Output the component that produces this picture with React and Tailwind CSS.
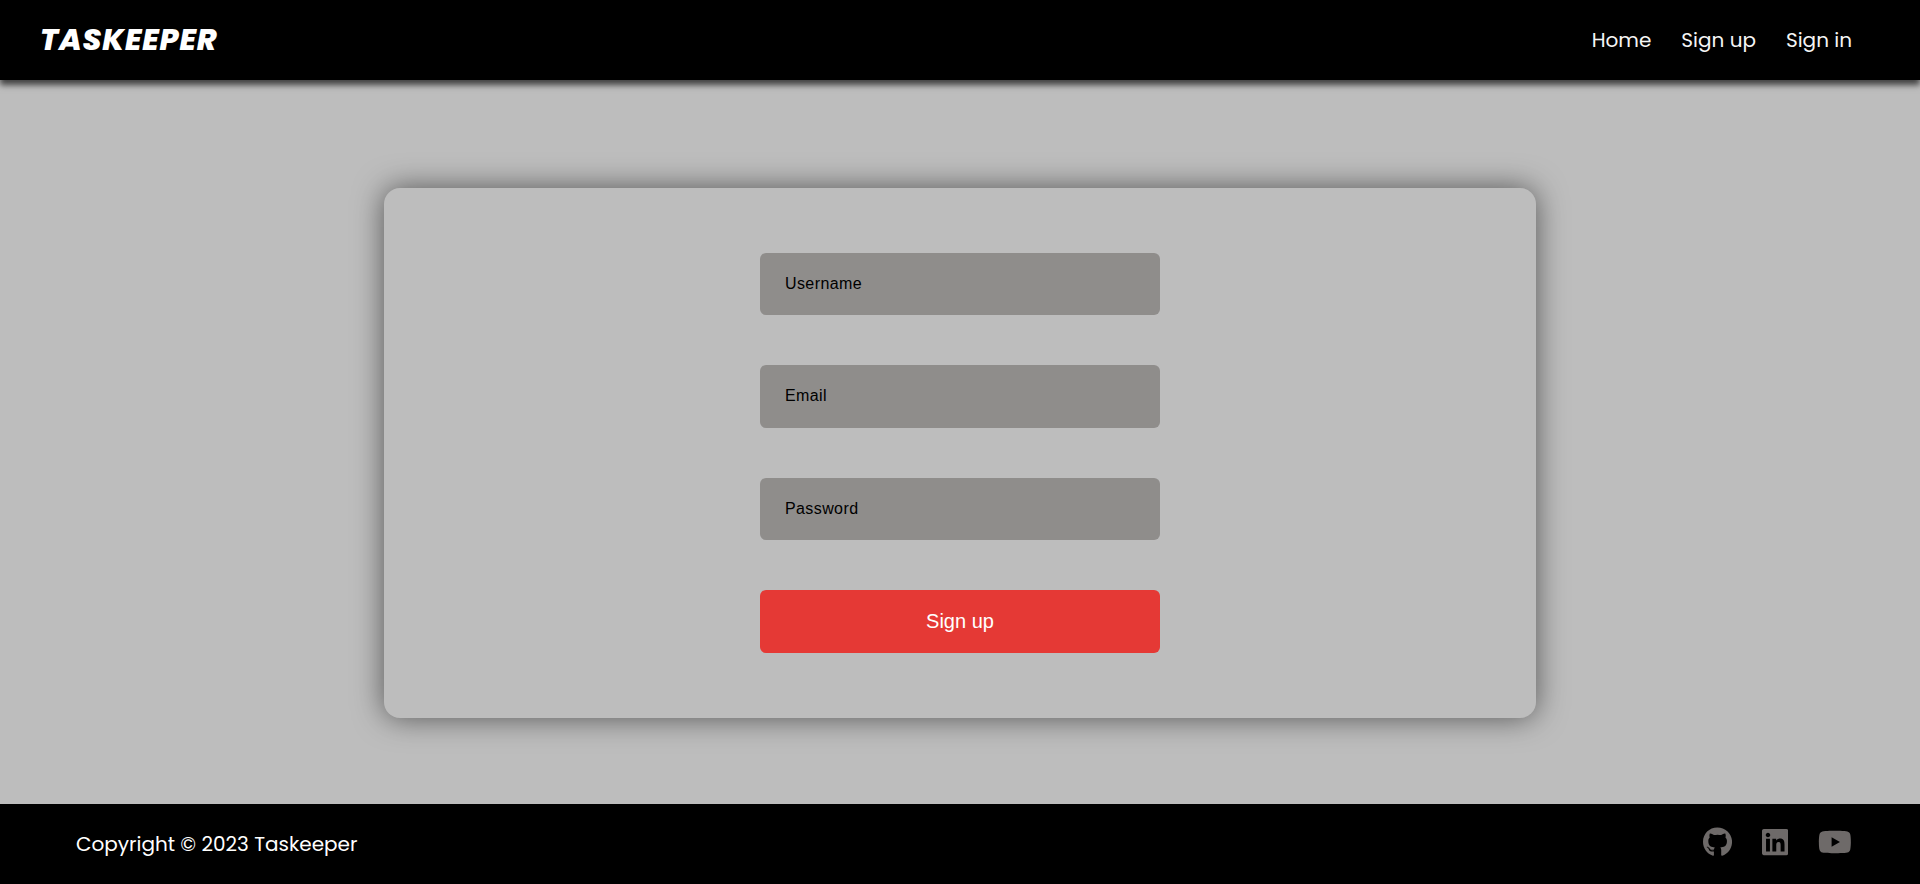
import { FaGithub, FaLinkedin, FaYoutube } from "react-icons/fa";

const fields = [
  { label: "Username", type: "text", inset: "" },
  { label: "Email", type: "email", inset: "pb-[2px]" },
  { label: "Password", type: "password", inset: "" },
];

export default function App() {
  return (
    <div className="flex h-[884px] w-full flex-col overflow-hidden bg-[#bdbdbd] font-['Poppins','Inter',sans-serif]">
      <header className="z-10 flex h-20 shrink-0 items-center justify-between bg-black pr-[68px] pl-[40px] text-white shadow-[0_5px_6px_rgba(0,0,0,0.65)]">
        <a href="#" className="text-[30px] leading-[44px] font-extrabold tracking-[0.85px] italic">TASKEEPER</a>
        <nav className="flex gap-[30px] text-[20px] whitespace-nowrap text-[#f5f5f5]">
          <a href="#">Home</a>
          <a href="#">Sign up</a>
          <a href="#">Sign in</a>
        </nav>
      </header>
      <main className="flex flex-1 justify-center pt-[108px]">
        <form className="flex h-[530px] w-[1152px] flex-col items-center gap-[50px] rounded-2xl bg-[#bdbdbd] pt-[65px] font-['Liberation_Sans',Arial,sans-serif] shadow-[0_0_30px_rgba(0,0,0,0.55)]">
          {fields.map((f) => (
            <input
              key={f.label}
              type={f.type}
              placeholder={f.label}
              className={`h-[62.4px] w-[400px] rounded-md bg-[#8f8d8b] px-[25px] text-base tracking-[0.4px] text-black placeholder:text-black ${f.inset}`}
            />
          ))}
          <button type="button" className="h-[62.4px] w-[400px] rounded-md bg-[#e53935] text-[20px] text-white">
            Sign up
          </button>
        </form>
      </main>
      <footer className="flex h-20 shrink-0 items-center justify-between bg-black pr-[68px] pl-[76px] text-white">
        <p className="text-[20px]">Copyright © 2023 Taskeeper</p>
        <div className="flex gap-[30px] pb-1 text-[#6e6a69]">
          <a href="#" aria-label="GitHub"><FaGithub className="h-[30px] w-[29.06px]" /></a>
          <a href="#" aria-label="LinkedIn"><FaLinkedin className="h-[30px] w-[26.25px]" /></a>
          <a href="#" aria-label="YouTube"><FaYoutube className="h-[30px] w-[33.75px]" /></a>
        </div>
      </footer>
    </div>
  );
}
